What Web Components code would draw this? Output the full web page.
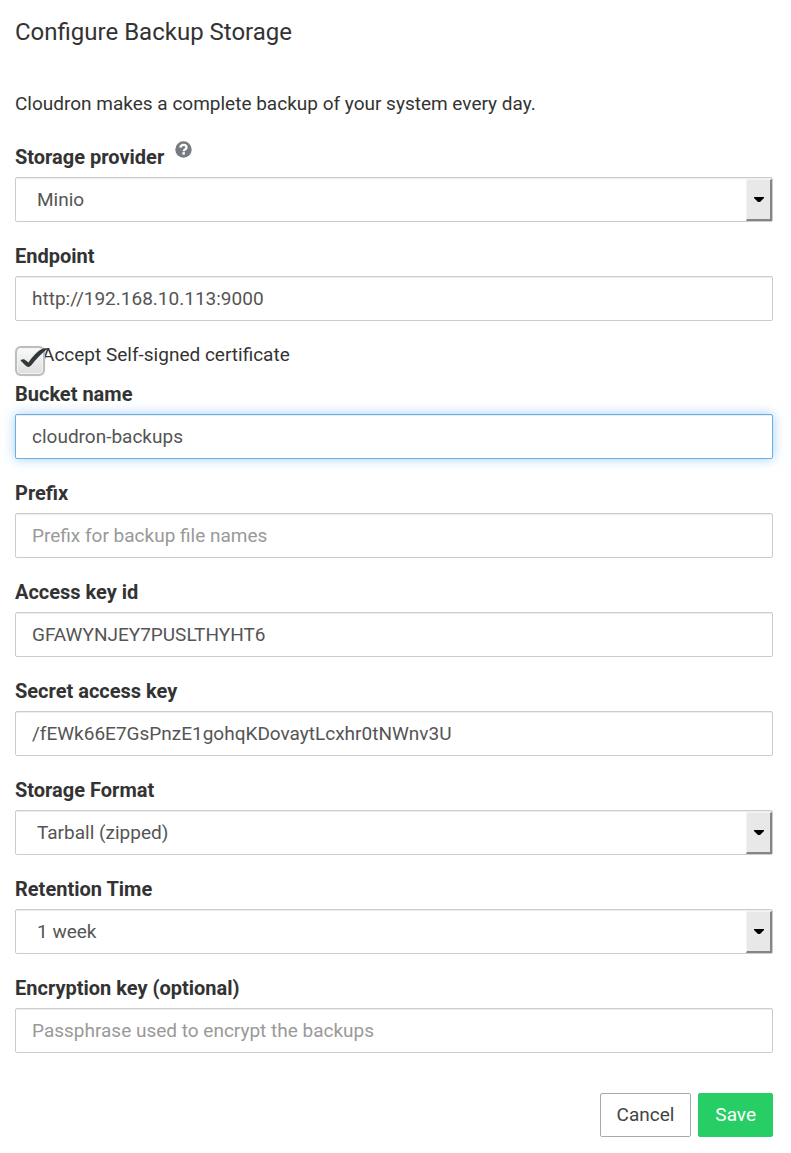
<!DOCTYPE html>
<html lang="en">
<head>
<meta charset="utf-8">
<title>Configure Backup Storage</title>
<style>
body { margin: 0; background: #fff; color: #333; font: 19px/26px Roboto, "Liberation Sans", sans-serif; }
</style>
</head>
<body>
<backup-dialog></backup-dialog>
<script>
const fieldStyle = `
:host { display: block; margin-bottom: 21px; }
.head { display: flex; gap: 11px; margin-bottom: 7px; }
label { font-size: 20px; font-weight: 700; color: #333; }
input, select { box-sizing: border-box; display: block; width: 100%; height: 45px; margin: 0; padding: 0 16px;
  border: 1px solid #ccc; border-radius: 2px; background: #fff; color: #555; font: inherit; outline: none;
  box-shadow: inset 0 1px 1px rgba(0,0,0,.075); }
input::placeholder { color: #999; opacity: 1; }
`;

class TextField extends HTMLElement {
  connectedCallback() {
    const root = this.attachShadow({ mode: 'open' });
    root.innerHTML = `<style>${fieldStyle}
      :host([active]) input, input:focus { border-color: #66afe9; box-shadow: inset 0 1px 1px rgba(0,0,0,.075), 0 0 12px rgba(102,175,233,.6); }
      </style>
      <div class="head"><label for="box"><slot></slot></label></div>
      <input id="box" type="text">`;
    const input = root.querySelector('input');
    input.value = this.getAttribute('value') || '';
    input.placeholder = this.getAttribute('placeholder') || '';
  }
}
customElements.define('text-field', TextField);

class HelpIcon extends HTMLElement {
  connectedCallback() {
    this.attachShadow({ mode: 'open' }).innerHTML = `<style>
      :host { display: block; margin-top: -3px; }
      a, svg { display: block; }
      </style>
      <a href="#help" aria-label="Help"><svg width="17" height="17" viewBox="0 0 17 17">
        <circle cx="8.500" cy="8.500" r="8.200" fill="#757b80"/>
        <path d="M5.400 6.600C5.600 4.700 6.900 3.900 8.600 3.900c1.700 0 2.900 1 2.900 2.500 0 1.200-.7 1.700-1.500 2.200-.8.500-1.200.8-1.200 1.600" fill="none" stroke="#fff" stroke-width="2.300"/>
        <rect x="7.400" y="11.200" width="2.500" height="2.400" fill="#fff"/>
      </svg></a>`;
  }
}
customElements.define('help-icon', HelpIcon);

class SelectField extends HTMLElement {
  connectedCallback() {
    const root = this.attachShadow({ mode: 'open' });
    root.innerHTML = `<style>${fieldStyle}
      .head { height: 26px; }
      .wrap { position: relative; }
      select { appearance: none; padding: 0 48px 0 21px; }
      .arrow { position: absolute; top: 2px; right: 1px; bottom: 1px; width: 26px; box-sizing: border-box;
        display: flex; align-items: center; justify-content: center; pointer-events: none;
        background: #e8e8e8; border: solid; border-width: 1px 2px 2px 1px; border-color: #f3f3f3 #858585 #858585 #f3f3f3; }
      </style>
      <div class="head"><label for="box"><slot></slot></label><slot name="help"></slot></div>
      <div class="wrap"><select id="box"></select>
        <span class="arrow"><svg width="10" height="5" viewBox="0 0 10 5"><path d="M0 0h10v1L6 5H4L0 1z" fill="#000"/></svg></span>
      </div>`;
    const select = root.querySelector('select');
    for (const name of this.getAttribute('options').split('|')) select.add(new Option(name));
  }
}
customElements.define('select-field', SelectField);

class CheckField extends HTMLElement {
  connectedCallback() {
    this.attachShadow({ mode: 'open' }).innerHTML = `<style>
      :host { display: block; position: relative; margin-bottom: 13px; padding-left: 27px; }
      label { display: block; }
      input { position: absolute; left: 0; top: 4px; width: 30px; height: 30px; margin: 0; box-sizing: border-box;
        appearance: none; border: 2px solid #bdbdbd; border-radius: 6px;
        background: linear-gradient(#fafafa, #dedede); box-shadow: inset 0 0 0 1px #f4f4f4, 0 0 1px #ccc; }
      svg { position: absolute; left: 4px; top: 4px; pointer-events: none; visibility: hidden; }
      input:checked ~ svg { visibility: visible; }
      </style>
      <label for="box"><slot></slot></label>
      <input id="box" type="checkbox" checked>
      <svg width="30" height="24" viewBox="0 0 30 24"><path d="M1.500 14.500Q3.500 12.500 5.500 13.500L9.500 16.500C14 10 19 4.500 24 2.500L29.500 2C22 8 17 13 12.500 19Q9.500 22.500 6.500 19.500Z" fill="#33383a"/></svg>`;
  }
}
customElements.define('check-field', CheckField);

class ActionButton extends HTMLElement {
  connectedCallback() {
    this.attachShadow({ mode: 'open' }).innerHTML = `<style>
      :host { display: block; }
      button { display: block; height: 44px; margin: 0; padding: 0 16px; border: 1px solid #aaa; border-radius: 2px;
        background: #fff; color: #444; font: inherit; }
      :host([primary]) button { background: #27ce65; border-color: #27ce65; color: #fff; }
      </style><button type="button"><slot></slot></button>`;
  }
}
customElements.define('action-button', ActionButton);

class BackupDialog extends HTMLElement {
  connectedCallback() {
    this.attachShadow({ mode: 'open' }).innerHTML = `<style>
      :host { display: block; padding: 16px 18px 16px 15px; }
      h1 { margin: 0 0 43px; font-size: 24px; line-height: 32px; font-weight: 400; }
      p { margin: 0 0 27px; }
      footer { display: flex; justify-content: flex-end; gap: 7px; margin-top: 40px; }
      </style>
      <h1>Configure Backup Storage</h1>
      <p>Cloudron makes a complete backup of your system every day.</p>
      <form>
        <select-field options="Minio|Amazon S3|Filesystem">Storage provider<help-icon slot="help"></help-icon></select-field>
        <text-field value="http://192.168.10.113:9000">Endpoint</text-field>
        <check-field>Accept Self-signed certificate</check-field>
        <text-field active value="cloudron-backups">Bucket name</text-field>
        <text-field placeholder="Prefix for backup file names">Prefix</text-field>
        <text-field value="GFAWYNJEY7PUSLTHYHT6">Access key id</text-field>
        <text-field value="/fEWk66E7GsPnzE1gohqKDovaytLcxhr0tNWnv3U">Secret access key</text-field>
        <select-field options="Tarball (zipped)|rsync">Storage Format</select-field>
        <select-field options="1 week|1 month|Forever">Retention Time</select-field>
        <text-field placeholder="Passphrase used to encrypt the backups">Encryption key (optional)</text-field>
      </form>
      <footer><action-button>Cancel</action-button><action-button primary>Save</action-button></footer>`;
  }
}
customElements.define('backup-dialog', BackupDialog);
</script>
</body>
</html>
